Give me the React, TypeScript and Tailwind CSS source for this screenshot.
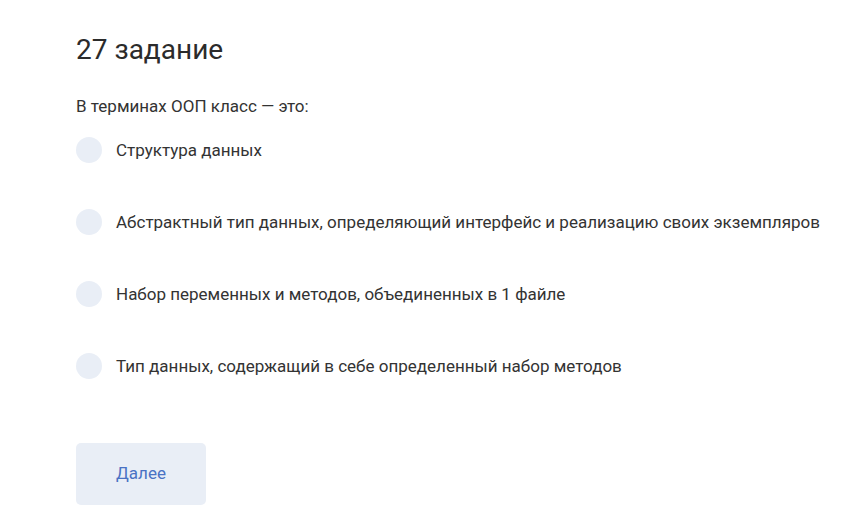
const options = [
  "Структура данных",
  "Абстрактный тип данных, определяющий интерфейс и реализацию своих экземпляров",
  "Набор переменных и методов, объединенных в 1 файле",
  "Тип данных, содержащий в себе определенный набор методов",
];

export default function App() {
  return (
    <main className="min-h-screen bg-white font-['Roboto',sans-serif] text-[#333333]">
      <section className="pl-[76px] pr-4 pt-[32px]">
        {/* Heading */}
        <h1 className="text-[28px] font-normal leading-[36px] text-[#2b2b2b]">27 задание</h1>

        <p className="mt-[28px] text-[17px] leading-[20px]">В терминах ООП класс — это:</p>

        {/* Options */}
        <div className="mt-[21px] flex flex-col gap-[46px]">
          {options.map((option) => (
            <label key={option} className="flex items-center gap-[14px]">
              <span className="h-[26px] w-[26px] shrink-0 rounded-full bg-[#e9eef6]" />
              <span className="whitespace-nowrap text-[17px] leading-[20px]">{option}</span>
            </label>
          ))}
        </div>

        <button className="mt-[64px] flex h-[62px] w-[130px] items-center justify-center rounded-[5px] bg-[#e9eef6] text-[17px] text-[#4a72c4]">
          Далее
        </button>
      </section>
    </main>
  );
}
